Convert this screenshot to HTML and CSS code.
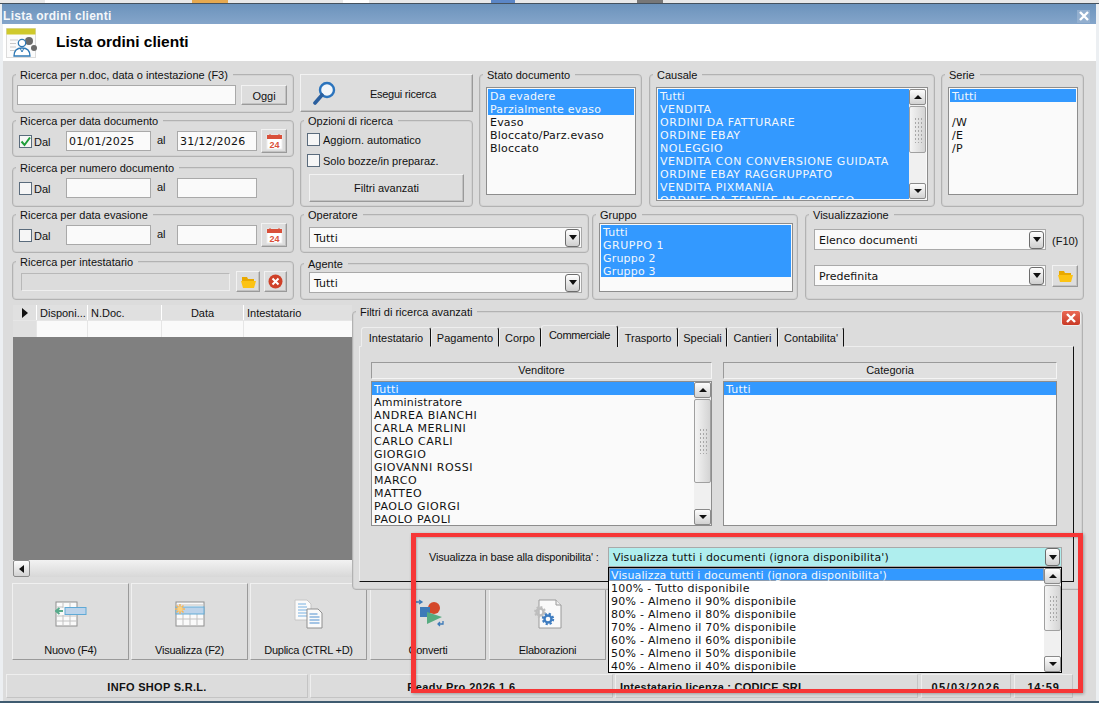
FILE: index.html
```html
<!DOCTYPE html>
<html lang="it">
<head>
<meta charset="utf-8">
<title>Lista ordini clienti</title>
<link rel="stylesheet" href="styles.css">
</head>
<body>
<div class="desk-strip"></div>
<div class="window">
  <div class="titlebar"><span>Lista ordini clienti</span><span class="win-close"><svg width="10" height="10" viewBox="0 0 10 10"><path d="M1 1L9 9M9 1L1 9" stroke="#fff" stroke-width="2.4"/></svg></span></div>
  <div class="header">
    <svg class="head-icon" width="31" height="31" viewBox="0 0 31 31">
      <rect x="0.5" y="0.5" width="29" height="29" fill="#fbfbfb" stroke="#dcdcdc"/>
      <rect x="0.5" y="0.5" width="29" height="6" fill="#cfc92c"/>
      <path d="M4 12h8M4 15.500h6M4 19h6M4 22.500h6" stroke="#c9c9c9" stroke-width="1.200"/>
      <circle cx="23" cy="13" r="4" fill="#6b6b6b"/><circle cx="28" cy="20" r="3" fill="#6b6b6b"/>
      <circle cx="16" cy="15" r="3.700" fill="#fff" stroke="#2f79b5" stroke-width="1.300"/>
      <path d="M8 28c0-6 3-8 8-8s8 2 8 8z" fill="#fff" stroke="#2f79b5" stroke-width="1.300"/>
      <path d="M14 20l2 4 2-4" fill="none" stroke="#2f79b5"/>
    </svg>
    <h1>Lista ordini clienti</h1>
  </div>

  <div class="form">
    <div class="form-left">
      <section class="group g-search">
        <span class="legend">Ricerca per n.doc, data o intestazione (F3)</span>
        <div class="row"><div class="input w-219"></div><div class="btn w-46">Oggi</div></div>
      </section>
      <section class="group g-range">
        <span class="legend">Ricerca per data documento</span>
        <div class="range">
          <span class="check on"><svg width="11" height="11" viewBox="0 0 11 11"><path d="M1.500 5.500L4.500 9L10 1.500" fill="none" stroke="#1f9e3a" stroke-width="2"/></svg></span><span class="dal">Dal</span>
          <div class="input date w-85">01/01/2025</div><span class="al">al</span><div class="input date w-80">31/12/2026</div>
          <div class="btn cal"><svg width="17" height="17" viewBox="0 0 17 17"><rect x="1" y="2" width="15" height="14" fill="#fff" stroke="#eee"/><path d="M1 2h15v4H1z" fill="#d9503a"/><path d="M4 1v3M13 1v3" stroke="#d9503a"/><text x="8.500" y="14.500" class="cal-num">24</text></svg></div>
        </div>
      </section>
      <section class="group g-num">
        <span class="legend">Ricerca per numero documento</span>
        <div class="range">
          <span class="check"></span><span class="dal">Dal</span>
          <div class="input w-85"></div><span class="al">al</span><div class="input w-80"></div>
        </div>
      </section>
      <section class="group g-eva">
        <span class="legend">Ricerca per data evasione</span>
        <div class="range">
          <span class="check"></span><span class="dal">Dal</span>
          <div class="input w-85"></div><span class="al">al</span><div class="input w-80"></div>
          <div class="btn cal"><svg width="17" height="17" viewBox="0 0 17 17"><rect x="1" y="2" width="15" height="14" fill="#fff" stroke="#eee"/><path d="M1 2h15v4H1z" fill="#d9503a"/><path d="M4 1v3M13 1v3" stroke="#d9503a"/><text x="8.500" y="14.500" class="cal-num">24</text></svg></div>
        </div>
      </section>
      <section class="group g-int">
        <span class="legend">Ricerca per intestatario</span>
        <div class="row int-row">
          <div class="input off w-209"></div>
          <div class="btn sq-24"><svg width="15" height="12" viewBox="0 0 15 12"><path d="M1 1h5l1 2h6v2H1z" fill="#e9a900"/><path d="M0 5h15l-2 7H2z" fill="#fcc314"/></svg></div>
          <div class="btn sq-23"><svg width="15" height="15" viewBox="0 0 15 15"><circle cx="7.500" cy="7.500" r="7" fill="#cf4028"/><path d="M4.500 4.500l6 6M10.500 4.500l-6 6" stroke="#fff" stroke-width="2"/></svg></div>
        </div>
      </section>
    </div>

    <div class="form-right">
      <div class="row-a">
        <div class="col-mid">
          <div class="btn run">
            <svg class="run-icon" width="24" height="24" viewBox="0 0 24 24"><circle cx="14" cy="9" r="7" fill="#f2f6fa" stroke="#2b74bd" stroke-width="2.400"/><path d="M9 14L2 22" stroke="#2b5f9e" stroke-width="3.600" stroke-linecap="round"/></svg>
            <span>Esegui ricerca</span>
          </div>
          <section class="group g-opt">
            <span class="legend">Opzioni di ricerca</span>
            <div class="opt"><span class="check"></span><span>Aggiorn. automatico</span></div>
            <div class="opt"><span class="check"></span><span>Solo bozze/in preparaz.</span></div>
            <div class="btn adv">Filtri avanzati</div>
          </section>
        </div>
        <section class="group g-stato">
          <span class="legend">Stato documento</span>
          <div class="list h-108">
            <div class="sel">Da evadere</div><div class="sel">Parzialmente evaso</div><div>Evaso</div><div>Bloccato/Parz.evaso</div><div>Bloccato</div>
          </div>
        </section>
        <section class="group g-causale">
          <span class="legend">Causale</span>
          <div class="list h-114 with-sb">
            <div class="items">
              <div class="sel">Tutti</div><div class="sel u">VENDITA</div><div class="sel u">ORDINI DA FATTURARE</div><div class="sel u">ORDINE EBAY</div><div class="sel u">NOLEGGIO</div><div class="sel u">VENDITA CON CONVERSIONE GUIDATA</div><div class="sel u">ORDINE EBAY RAGGRUPPATO</div><div class="sel u">VENDITA PIXMANIA</div><div class="sel u">ORDINE DA TENERE IN SOSPESO</div>
            </div>
            <div class="vsb">
              <span class="sb-btn up"></span><span class="thumb th-47"><i class="grip"></i></span><span class="track"></span><span class="sb-btn down"></span>
            </div>
          </div>
        </section>
        <section class="group g-serie">
          <span class="legend">Serie</span>
          <div class="list h-108">
            <div class="sel">Tutti</div><div>&nbsp;</div><div>/W</div><div>/E</div><div>/P</div>
          </div>
        </section>
      </div>
      <div class="row-b">
        <div class="col-op">
          <section class="group g-oper">
            <span class="legend">Operatore</span>
            <div class="combo w-273"><span>Tutti</span><span class="arrow"></span></div>
          </section>
          <section class="group g-agente">
            <span class="legend">Agente</span>
            <div class="combo w-273"><span>Tutti</span><span class="arrow"></span></div>
          </section>
        </div>
        <section class="group g-gruppo">
          <span class="legend">Gruppo</span>
          <div class="list h-69">
            <div class="sel">Tutti</div><div class="sel u">GRUPPO 1</div><div class="sel">Gruppo 2</div><div class="sel">Gruppo 3</div>
          </div>
        </section>
        <section class="group g-vis">
          <span class="legend">Visualizzazione</span>
          <div class="vis-row"><div class="combo w-232"><span>Elenco documenti</span><span class="arrow"></span></div><span class="f10">(F10)</span></div>
          <div class="vis-row"><div class="combo w-232"><span>Predefinita</span><span class="arrow"></span></div><div class="btn sq-26"><svg width="15" height="12" viewBox="0 0 15 12"><path d="M1 1h5l1 2h6v2H1z" fill="#e9a900"/><path d="M0 5h15l-2 7H2z" fill="#fcc314"/></svg></div></div>
        </section>
      </div>
    </div>
  </div>

  <div class="lower">
    <div class="grid">
      <div class="grid-head">
        <span class="ind"><i class="tri"></i></span><span>Disponi...</span><span>N.Doc.</span><span class="center">Data</span><span>Intestatario</span>
      </div>
      <div class="grid-row"><span class="ind"></span><span></span><span></span><span></span><span></span></div>
      <div class="grid-dark"></div>
      <div class="hsb"><span class="sb-btn left"></span><span class="track"></span></div>
    </div>

    <div class="tools">
      <div class="tool">
        <svg class="ic-t" width="32" height="26" viewBox="0 0 32 26"><rect x="1" y="1" width="21" height="24" fill="#fafafa" stroke="#8f8f8f"/><path d="M8 1v6M15 1v6M1 6h7M1 15h21M1 20h21M8 14v11M15 14v11" stroke="#c2c2c2"/><rect x="10" y="6.500" width="21" height="7" fill="#bcd3ea" stroke="#5fa9d6"/><path d="M1 10h7M4.500 7L1 10l3.500 3" fill="none" stroke="#58ab8c" stroke-width="2"/></svg>
        <span>Nuovo (F4)</span>
      </div>
      <div class="tool">
        <svg class="ic-t" width="32" height="26" viewBox="0 0 32 26"><rect x="2" y="1" width="28" height="24" fill="#fafafa" stroke="#8f8f8f"/><path d="M9 13v12M16 13v12M23 13v12M2 18h28M2 4h28" stroke="#c2c2c2"/><rect x="2" y="6" width="28" height="7" fill="#bcd3ea" stroke="#63abd6"/><g stroke="#f5b55b" stroke-width="1.500"><path d="M6 3v10M1 8h10M2.500 4.500l7 7M9.500 4.500l-7 7"/></g><circle cx="6" cy="8" r="2.500" fill="#fbd27f"/></svg>
        <span>Visualizza (F2)</span>
      </div>
      <div class="tool">
        <svg class="ic-d" width="30" height="30" viewBox="0 0 30 30"><path d="M1 1h12l4 4v16H1z" fill="#fafafa" stroke="#c6c6c6"/><path d="M4 5h8M4 8h9M4 11h9M4 14h9M4 17h9" stroke="#78b2e3"/><path d="M13 10h11l4 4v15H13z" fill="#fafafa" stroke="#8f8f8f"/><path d="M15.500 15h8M15.500 18h10M15.500 21h10M15.500 24h10" stroke="#4f8fd0"/></svg>
        <span>Duplica (CTRL +D)</span>
      </div>
      <div class="tool late">
        <svg class="ic-c" width="30" height="30" viewBox="0 0 30 30"><path d="M1 3h5M4 1l3 2-3 2" fill="none" stroke="#3d7ab8" stroke-width="1.300"/><circle cx="19" cy="9" r="6" fill="#d4482a"/><rect x="5" y="8" width="10" height="10" fill="#3d7ab8"/><path d="M12 13l15 5-15 7z" fill="#57ab80"/><path d="M28 22v3h-5M25 23l-2 2 2 2" fill="none" stroke="#3d7ab8" stroke-width="1.300"/></svg>
        <span>Converti</span>
      </div>
      <div class="tool">
        <svg class="ic-d" width="30" height="30" viewBox="0 0 30 30"><path d="M6 1h17l5 5v23H6z" fill="#fafafa" stroke="#9a9a9a"/><path d="M23 1v5h5" fill="#eee" stroke="#9a9a9a"/><circle cx="7" cy="13" r="3.500" fill="none" stroke="#bdbdbd" stroke-width="2.400"/><circle cx="7" cy="13" r="5" fill="none" stroke="#bdbdbd" stroke-width="1.800" stroke-dasharray="2 1.900"/><circle cx="15" cy="20" r="3.500" fill="none" stroke="#3e7cc0" stroke-width="2.400"/><circle cx="15" cy="20" r="5.200" fill="none" stroke="#3e7cc0" stroke-width="2" stroke-dasharray="2.200 1.900"/></svg>
        <span>Elaborazioni</span>
      </div>
    </div>

    <div class="panel">
      <section class="group g-filters">
        <span class="legend">Filtri di ricerca avanzati</span>
        <span class="panel-close"><svg width="12" height="12" viewBox="0 0 12 12"><path d="M2 2l8 8M10 2l-8 8" stroke="#fff" stroke-width="2.400"/></svg></span>
        <div class="tabs">
          <span class="tab t-70">Intestatario</span><span class="tab t-68">Pagamento</span><span class="tab t-42">Corpo</span><span class="tab active">Commerciale</span><span class="tab t-60">Trasporto</span><span class="tab t-49">Speciali</span><span class="tab t-51">Cantieri</span><span class="tab t-66">Contabilita'</span>
        </div>
        <div class="tab-body">
          <div class="cols">
            <div class="col c-vend">
              <div class="col-head">Venditore</div>
              <div class="list flush h-145 with-sb">
                <div class="items">
                  <div class="sel">Tutti</div><div>Amministratore</div><div class="u">ANDREA BIANCHI</div><div class="u">CARLA MERLINI</div><div class="u">CARLO CARLI</div><div class="u">GIORGIO</div><div class="u">GIOVANNI ROSSI</div><div class="u">MARCO</div><div class="u">MATTEO</div><div class="u">PAOLO GIORGI</div><div class="u">PAOLO PAOLI</div>
                </div>
                <div class="vsb">
                  <span class="sb-btn up"></span><span class="thumb th-84"><i class="grip"></i></span><span class="track"></span><span class="sb-btn down"></span>
                </div>
              </div>
            </div>
            <div class="col c-cat">
              <div class="col-head">Categoria</div>
              <div class="list flush h-145"><div class="sel">Tutti</div></div>
            </div>
          </div>
          <div class="avail">
            <span class="avail-label">Visualizza in base alla disponibilita' :</span>
            <div class="avail-wrap">
              <div class="combo cyan"><span>Visualizza tutti i documenti (ignora disponibilita')</span><span class="arrow"></span></div>
              <div class="dropdown with-sb">
                <div class="items">
                  <div class="sel focus">Visualizza tutti i documenti (ignora disponibilita')</div><div>100% - Tutto disponibile</div><div>90% - Almeno il 90% disponibile</div><div>80% - Almeno il 80% disponibile</div><div>70% - Almeno il 70% disponibile</div><div>60% - Almeno il 60% disponibile</div><div>50% - Almeno il 50% disponibile</div><div>40% - Almeno il 40% disponibile</div>
                </div>
                <div class="vsb">
                  <span class="sb-btn up"></span><span class="thumb th-46"><i class="grip"></i></span><span class="track"></span><span class="sb-btn down"></span>
                </div>
              </div>
            </div>
          </div>
        </div>
      </section>
    </div>
  </div>

  <div class="status">
    <span class="field s-302">INFO SHOP S.R.L.</span><span class="field s-303">Ready Pro 2026.1.6</span><span class="field s-lic">Intestatario licenza : CODICE SRL</span><span class="field s-90">05/03/2026</span><span class="field s-59">14:59</span>
  </div>
</div>
<div class="desk-foot"></div>
<div class="annotation"></div>
</body>
</html>
```
FILE: styles.css
```css
* { box-sizing: border-box; }
html, body { margin: 0; padding: 0; }
body {
  width: 1099px; height: 703px; overflow: hidden; position: relative;
  background: #eceff2;
  font: 11px "Liberation Sans", Arial, sans-serif; color: #111;
}
.desk-strip {
  height: 4px; border-bottom: 1px solid #45525e;
  background: linear-gradient(90deg, #e9e9e9 0 45px, #fff 45px 80px, #e9e9e9 80px 192px, #e6a950 192px 228px, #e9e9e9 228px 343px, #fff 343px 369px, #e9e9e9 369px 491px, #5b86c6 491px 515px, #e9e9e9 515px 637px, #777 637px 663px, #e9e9e9 663px);
}
.desk-foot { height: 2px; background: #3f5b70; }
.window {
  height: 697px; margin: 0 3px; background: #dcdcdc;
  display: flex; flex-direction: column;
  border-bottom: 0;
}
.titlebar {
  height: 20px; flex: none; display: flex; align-items: center; justify-content: space-between;
  padding: 4px 5px 0 1px; margin-left: -1px;
  background: linear-gradient(#6c93bc, #84a5ca);
  color: #f4f7fa; font-size: 12px; font-weight: bold; letter-spacing: .3px;
}
.win-close { width: 13px; height: 13px; background: #93afcf; display: flex; align-items: center; justify-content: center; margin-right: 1px; }
.header { height: 37px; flex: none; background: #fff; display: flex; align-items: center; padding-left: 3px; }
.head-icon { margin-top: 1px; }
.header h1 { margin: 0 0 2px 19px; font-size: 15.500px; font-weight: bold; color: #000; }

.form { display: flex; gap: 6px; padding: 13px 0 0 9px; flex: none; }
.form-left { width: 282px; display: grid; grid-template-rows: 46px 47px 47px 47px 39px; }
.form-right { width: 785px; }
.row-a { display: flex; height: 133px; }
.row-b { display: flex; height: 86px; margin-top: 7px; }

.group { position: relative; border: 1px solid #b2b2b2; border-radius: 4px; box-shadow: inset 0 0 0 1px #d2d2d2; }
.legend { position: absolute; left: 3px; top: -7px; line-height: 14px; background: #dcdcdc; padding: 0 5px 0 4px; white-space: nowrap; }

.g-search { height: 39px; padding: 10px 0 0 4px; }
.g-range { height: 37px; padding: 8px 0 0 6px; }
.g-num { height: 40px; padding: 8px 0 0 6px; }
.g-eva { height: 39px; padding: 8px 0 0 6px; }
.g-int { height: 39px; padding: 9px 0 0 8px; }

.row { display: flex; gap: 5px; }
.int-row { align-items: flex-start; }
.int-row .sq-24 { margin-left: 1px; }
.int-row .sq-23 { margin-left: -1px; }
.range { display: flex; align-items: center; height: 24px; }
.dal { width: 34px; padding: 2px 0 0 2px; }
.al { width: 26px; padding-left: 6px; margin-top: -2px; }
.cal { width: 26px; height: 24px; margin-left: 4px; }
.cal-num { font: bold 9px "Liberation Sans", sans-serif; fill: #d9503a; text-anchor: middle; }

.input { height: 20px; background: #fafafa; border: 1px solid #a9a9a9; }
.input.off { height: 18px; background: #dcdcdc; border-color: #b8b8b8 #eee #eee #b8b8b8; margin-top: 2px; }
.date { font: 11px/20px "DejaVu Sans", Verdana, sans-serif; letter-spacing: .2px; padding-left: 2px; color: #111; }
.w-219 { width: 219px; } .w-46 { width: 46px; } .w-85 { width: 85px; } .w-80 { width: 80px; } .w-209 { width: 209px; }
.w-273 { width: 273px; } .w-232 { width: 232px; }

.btn {
  display: flex; align-items: center; justify-content: center;
  background: #dddddd; border: 1px solid; border-color: #f2f2f2 #9a9a9a #9a9a9a #f2f2f2;
  box-shadow: inset -1px -1px 0 #c2c2c2;
  flex: none;
}
.w-46 { height: 20px; padding-top: 2px; }
.sq-24 { width: 24px; height: 21px; } .sq-23 { width: 23px; height: 21px; } .sq-26 { width: 26px; height: 22px; margin-left: 6px; }

.check { display: flex; align-items: center; justify-content: center; width: 13px; height: 13px; flex: none; background: #f6f6f6; border: 1px solid #5a6b7c; }

.col-mid { width: 173px; flex: none; }
.run { height: 38px; position: relative; padding: 2px 0 0 33px; letter-spacing: -.25px; }
.run-icon { position: absolute; left: 12px; top: 6px; }
.g-opt { height: 87px; margin-top: 8px; padding: 12px 0 0 6px; }
.opt { display: flex; gap: 3px; height: 13px; margin-bottom: 8px; line-height: 15px; white-space: nowrap; }
.adv { width: 155px; height: 28px; margin: -1px 0 0 2px; }

.g-stato { width: 163px; flex: none; margin-left: 6px; padding: 12px 0 0 6px; }
.g-causale { width: 286px; flex: none; margin-left: 7px; padding: 12px 0 0 6px; }
.g-serie { width: 143px; flex: none; margin-left: 6px; padding: 12px 0 0 6px; }
.g-stato .list { width: 150px; } .g-causale .list { width: 272px; } .g-serie .list { width: 130px; }

.list {
  background: #fafafa; border: 1px solid #8d8d8d; padding: 1px; overflow: hidden;
  font: 11px/15px "DejaVu Sans", Verdana, sans-serif; letter-spacing: .2px; color: #111; white-space: nowrap;
}
.list > div:not(.items):not(.vsb), .items > div { height: 13px; padding-left: 2px; }
.sel { background: #3399ff; color: #f2f7fc; }
.u { letter-spacing: .55px; }
.with-sb { display: flex; }
.items { flex: 1; min-width: 0; overflow: hidden; }
.h-108 { height: 108px; } .h-114 { height: 114px; } .h-69 { height: 69px; } .h-145 { height: 145px; }
.flush { padding: 0; }

.vsb { width: 17px; flex: none; display: flex; flex-direction: column; background: #f1f1f1; }
.track { flex: 1; background: #f0f0f0; }
.sb-btn {
  flex: none; display: flex; align-items: center; justify-content: center;
  width: 17px; height: 16px; border: 1px solid #8a8a8a; border-radius: 2px;
  background: linear-gradient(#fdfdfd, #d2d2d2);
}
.sb-btn::before { content: ""; border: 4px solid transparent; }
.up::before { border-bottom: 4px solid #111; border-top: 0; }
.down::before { border-top: 4px solid #111; border-bottom: 0; }
.left::before { border-right: 5px solid #111; border-left: 0; }
.thumb {
  flex: none; display: flex; align-items: center; justify-content: center; margin-top: 1px;
  border: 1px solid #a0a0a0; border-radius: 2px;
  background: linear-gradient(90deg, #f4f4f4, #d4d4d4);
}
.th-47 { height: 47px; } .th-84 { height: 84px; } .th-46 { height: 46px; }
.grip { display: block; width: 8px; height: 26px; background: radial-gradient(circle, #a8a8a8 0 .8px, transparent 1px) 0 0 / 3px 4px; }

.col-op { width: 289px; flex: none; display: flex; flex-direction: column; gap: 10px; }
.g-oper { height: 39px; padding: 12px 0 0 8px; }
.g-agente { height: 37px; padding: 8px 0 0 8px; }
.combo {
  height: 21px; display: flex; align-items: center; justify-content: space-between;
  padding: 0 1px 0 4px; background: #fafafa; border: 1px solid #a9a9a9; flex: none;
  font: 11px "DejaVu Sans", Verdana, sans-serif; color: #111; white-space: nowrap;
}
.combo span:first-child { padding-top: 1px; }
.arrow {
  width: 15px; height: 18px; flex: none; display: flex; align-items: center; justify-content: center;
  border: 1px solid #6c6c6c; border-radius: 3px; background: linear-gradient(#fff, #cfcfcf);
}
.arrow::before { content: ""; border: 4px solid transparent; border-top: 5px solid #111; border-bottom: 0; }
.g-gruppo { width: 206px; flex: none; margin-left: 3px; padding: 8px 0 0 6px; }
.g-gruppo .list { width: 194px; }
.g-vis { width: 279px; flex: none; margin-left: 7px; padding: 14px 0 0 8px; }
.vis-row { display: flex; align-items: center; height: 21px; margin-bottom: 15px; }
.f10 { margin-left: 6px; padding-top: 2px; }

.lower { position: relative; margin: 5px 0 0 10px; flex: none; height: 355px; }
.grid { height: 272px; width: 400px; display: flex; flex-direction: column; }
.grid-head, .grid-row { display: grid; grid-template-columns: 24px 51px 74px 82px 1fr; flex: none; }
.grid-head { height: 15px; line-height: 16px; background: #fff; }
.grid-head span { background: #e0e0e0; margin-right: 1px; padding-left: 3px; white-space: nowrap; }
.grid-head .center { text-align: center; padding: 0; }
.grid-head .ind, .grid-row .ind { padding: 0; display: flex; align-items: center; justify-content: center; background: #e0e0e0; }
.tri { border: 5px solid transparent; border-left: 6px solid #111; border-right: 0; }
.grid-row { height: 17px; background: #e6e6e6; }
.grid-row span { background: #fafafa; margin-right: 1px; margin-top: 1px; }
.grid-dark { flex: 1; background: #808080; }
.hsb { height: 17px; display: flex; background: #e6e6e6; flex: none; }
.hsb .track { background: linear-gradient(#f2f2f2, #d8d8d8); }
.left { height: 17px; }

.tools { display: flex; gap: 2px; margin: 6px 0 0 -1px; }
.tool {
  width: 117px; height: 77px; flex: none; display: flex; flex-direction: column; align-items: center;
  padding-top: 16px; position: relative;
  background: #dddddd; border: 1px solid; border-color: #f0f0f0 #9a9a9a #9a9a9a #f0f0f0;
}
.tool span { position: absolute; bottom: 2px; left: 0; right: 0; text-align: center; line-height: 13px; white-space: nowrap; letter-spacing: -.25px; }
.ic-t { margin-top: 1px; }
.ic-d { margin-top: -1px; }
.ic-c { margin: -1px 0 0 4px; }
.late { margin-left: 1px; width: 116px; }
.tool.late + .tool { margin-left: 1px; }

.panel { position: absolute; left: 339px; top: 0; width: 733px; height: 285px; padding-top: 6px; background: #dcdcdc; }
.g-filters { height: 279px; width: 731px; padding: 14px 0 0 6px; border-radius: 4px; }
.panel-close {
  position: absolute; right: 1px; top: -2px; width: 20px; height: 16px; border-radius: 3px;
  background: linear-gradient(#ea6a55, #c93a26); border: 1px solid #eee; display: flex; align-items: center; justify-content: center;
}
.tabs { display: flex; height: 21px; padding-left: 2px; position: relative; z-index: 1; }
.tab {
  height: 20px; line-height: 20px; text-align: center; white-space: nowrap; margin-top: 1px;
  background: #dcdcdc; border: 1px solid; border-color: #eee #111 transparent #eee; border-radius: 3px 3px 0 0;
}
.t-70 { width: 70px; } .t-68 { width: 68px; } .t-42 { width: 42px; } .t-60 { width: 60px; } .t-49 { width: 49px; } .t-51 { width: 51px; } .t-66 { width: 66px; }
.active { width: 77px; height: 22px; margin-top: -1px; line-height: 18px; border-bottom: 0; letter-spacing: -.35px; }
.tab-body {
  width: 715px; height: 236px; margin-top: -1px;
  border: 1px solid; border-color: #eee #111 #111 #eee; padding: 15px 0 0 11px;
}
.cols { display: flex; gap: 11px; }
.c-vend { width: 341px; } .c-cat { width: 334px; }
.col-head {
  height: 17px; line-height: 15px; text-align: center; margin-bottom: 2px;
  background: #e0e0e0; border: 1px solid; border-color: #9a9a9a #f4f4f4 #f4f4f4 #9a9a9a;
}
.avail { display: flex; margin-top: 21px; }
.avail-label { width: 179px; margin-left: 58px; line-height: 21px; white-space: nowrap; letter-spacing: -.18px; }
.avail-wrap { position: relative; width: 454px; }
.cyan { height: 20px; background: #afeeee; letter-spacing: .12px; }
.cyan .arrow { height: 18px; }
.dropdown {
  position: absolute; left: 0; top: 20px; width: 454px; height: 106px; z-index: 3;
  background: #fff; border: 1px solid #000; display: flex;
  font: 11px/15px "DejaVu Sans", Verdana, sans-serif; letter-spacing: .25px; color: #111; white-space: nowrap;
}
.dropdown .focus { letter-spacing: .12px; }
.focus { box-shadow: inset 0 0 0 1px rgba(233, 162, 95, .5); }

.status { display: flex; margin: 14px 0 0 3px; flex: none; }
.field {
  height: 24px; line-height: 24px; text-align: center; font-weight: bold; white-space: nowrap;
  border: 1px solid; border-color: #eee #c4c4c4 #c4c4c4 #eee; margin-right: 2px; letter-spacing: .3px;
}
.s-302 { width: 302px; } .s-303 { width: 303px; letter-spacing: .45px; }
.s-lic { width: 303px; text-align: left; padding-left: 4px; margin-right: 3px; letter-spacing: .25px; }
.s-90 { width: 90px; margin-right: 3px; letter-spacing: 1.4px; } .s-59 { width: 59px; letter-spacing: .8px; }

.annotation {
  position: absolute; left: 411px; top: 533px; width: 672px; height: 160px; pointer-events: none;
  border: solid #f63636; border-width: 4px 5px;
  box-shadow: 1px 1px 3px rgba(0,0,0,.3), inset 1px 1px 2px rgba(0,0,0,.2);
}
```
